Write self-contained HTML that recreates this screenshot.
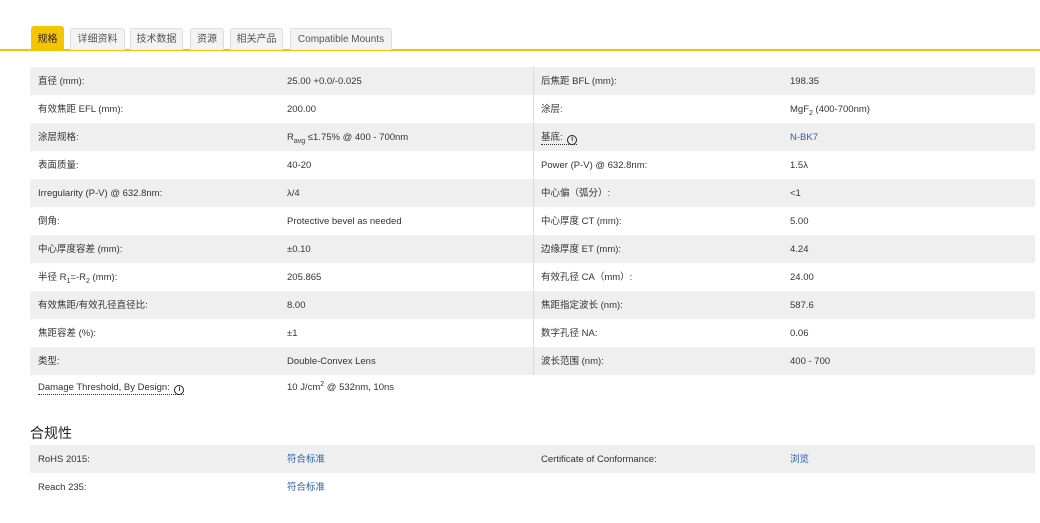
<!DOCTYPE html>
<html><head><meta charset="utf-8"><style>
body{margin:0;width:1040px;height:523px;background:#fff;font-family:"Liberation Sans","Noto Sans CJK SC",sans-serif;font-size:9.5px;color:#333;position:relative;overflow:hidden}
.tabs{position:absolute;left:0;top:0;width:1040px;height:51px;border-bottom:2px solid #f5c400;box-sizing:border-box}
.tab{position:absolute;top:28px;height:22px;line-height:22px;background:#f3f3f3;border:1px solid #ddd;border-bottom:none;border-radius:3px 3px 0 0;box-sizing:border-box;color:#555;text-align:center;font-size:10px}
.tab.on{background:#f5c400;border-color:#f5c400;color:#222;top:26px;height:24px;line-height:26px}
.row{position:absolute;left:30px;width:1005px;height:28px;line-height:28px}
.row.g{background:#efefef}
.row span.a,.row span.b,.row span.c,.row span.d{position:absolute;top:1px;white-space:nowrap}
.a{left:8px}.b{left:257px}.c{left:511px}.d{left:760px}
sub,sup{font-size:7px;line-height:0;position:relative;vertical-align:baseline}
sub{top:3px}sup{top:-4px}
.div{position:absolute;left:533px;top:67px;width:1px;height:308px;background:#ddd}
.lnk{color:#2a5db0}
.dot{border-bottom:1px dotted #333;padding-bottom:1px}
.i{display:inline-block;width:8px;height:8px;border:1.4px solid #222;border-radius:50%;font-size:7px;line-height:8px;text-align:center;font-weight:bold;vertical-align:-1px;margin-left:2px}
h3{position:absolute;left:30px;top:423px;margin:0;font-size:14px;font-weight:normal;color:#222}
</style></head><body>
<div class="tabs">
<div class="tab on" style="left:31px;width:33px">规格</div>
<div class="tab" style="left:70px;width:55px">详细资料</div>
<div class="tab" style="left:130px;width:53px">技术数据</div>
<div class="tab" style="left:190px;width:34px">资源</div>
<div class="tab" style="left:230px;width:53px">相关产品</div>
<div class="tab" style="left:290px;width:102px">Compatible Mounts</div>
</div>
<div class="row g" style="top:67px"><span class="a">直径 (mm):</span><span class="b">25.00 +0.0/-0.025</span><span class="c">后焦距 BFL (mm):</span><span class="d">198.35</span></div>
<div class="row" style="top:95px"><span class="a">有效焦距 EFL (mm):</span><span class="b">200.00</span><span class="c">涂层:</span><span class="d">MgF<sub>2</sub> (400-700nm)</span></div>
<div class="row g" style="top:123px"><span class="a">涂层规格:</span><span class="b">R<sub>avg</sub> ≤1.75% @ 400 - 700nm</span><span class="c"><span class="dot">基底: <span class="i">i</span></span></span><span class="d lnk">N-BK7</span></div>
<div class="row" style="top:151px"><span class="a">表面质量:</span><span class="b">40-20</span><span class="c">Power (P-V) @ 632.8nm:</span><span class="d">1.5λ</span></div>
<div class="row g" style="top:179px"><span class="a">Irregularity (P-V) @ 632.8nm:</span><span class="b">λ/4</span><span class="c">中心偏（弧分）:</span><span class="d">&lt;1</span></div>
<div class="row" style="top:207px"><span class="a">倒角:</span><span class="b">Protective bevel as needed</span><span class="c">中心厚度 CT (mm):</span><span class="d">5.00</span></div>
<div class="row g" style="top:235px"><span class="a">中心厚度容差 (mm):</span><span class="b">±0.10</span><span class="c">边缘厚度 ET (mm):</span><span class="d">4.24</span></div>
<div class="row" style="top:263px"><span class="a">半径 R<sub>1</sub>=-R<sub>2</sub> (mm):</span><span class="b">205.865</span><span class="c">有效孔径 CA（mm）:</span><span class="d">24.00</span></div>
<div class="row g" style="top:291px"><span class="a">有效焦距/有效孔径直径比:</span><span class="b">8.00</span><span class="c">焦距指定波长 (nm):</span><span class="d">587.6</span></div>
<div class="row" style="top:319px"><span class="a">焦距容差 (%):</span><span class="b">±1</span><span class="c">数字孔径 NA:</span><span class="d">0.06</span></div>
<div class="row g" style="top:347px"><span class="a">类型:</span><span class="b">Double-Convex Lens</span><span class="c">波长范围 (nm):</span><span class="d">400 - 700</span></div>
<div class="row" style="top:373px"><span class="a"><span class="dot">Damage Threshold, By Design: <span class="i">i</span></span></span><span class="b">10 J/cm<sup>2</sup> @ 532nm, 10ns</span></div>
<div class="div"></div>
<h3>合规性</h3>
<div class="row g" style="top:445px"><span class="a">RoHS 2015:</span><span class="b lnk">符合标准</span><span class="c">Certificate of Conformance:</span><span class="d lnk">浏览</span></div>
<div class="row" style="top:473px"><span class="a">Reach 235:</span><span class="b lnk">符合标准</span></div>
</body></html>
